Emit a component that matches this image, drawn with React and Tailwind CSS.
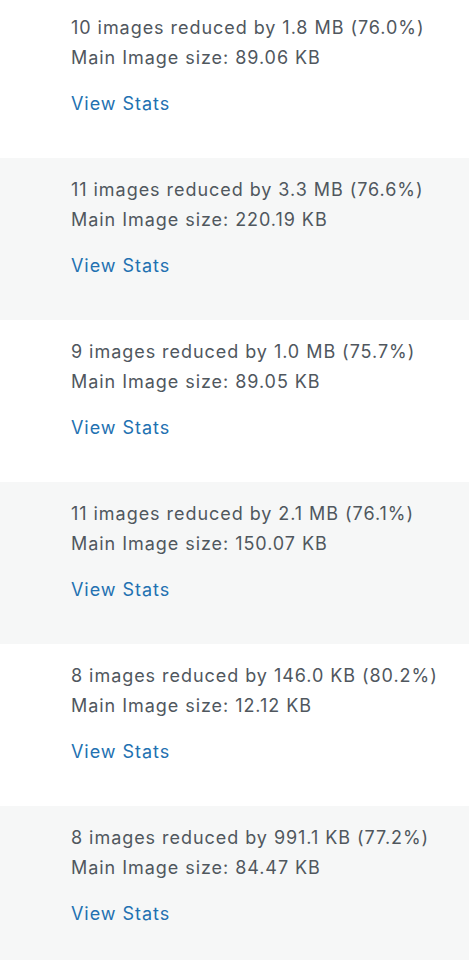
import React from "react";

const rows = [
  ["10 images reduced by 1.8 MB (76.0%)", "Main Image size: 89.06 KB"],
  ["11 images reduced by 3.3 MB (76.6%)", "Main Image size: 220.19 KB"],
  ["9 images reduced by 1.0 MB (75.7%)", "Main Image size: 89.05 KB"],
  ["11 images reduced by 2.1 MB (76.1%)", "Main Image size: 150.07 KB"],
  ["8 images reduced by 146.0 KB (80.2%)", "Main Image size: 12.12 KB"],
  ["8 images reduced by 991.1 KB (77.2%)", "Main Image size: 84.47 KB"],
];

export default function App() {
  return (
    <div
      className="w-[469px] h-[960px] overflow-hidden bg-white tracking-[0.95px]"
      style={{ fontFamily: 'Inter, "Liberation Sans", Arial, sans-serif' }}
    >
      <div className="-mt-[4px] flex flex-col">
        {rows.map((r, i) => (
          <div
            key={i}
            className={`h-[162px] shrink-0 pl-[71px] pt-[17px] ${i % 2 === 1 ? "bg-[#f6f7f7]" : "bg-white"}`}
          >
            <div className="text-[18px] leading-[30px] text-[#50575e]">{r[0]}</div>
            <div className="text-[18px] leading-[30px] text-[#50575e]">{r[1]}</div>
            <a className="mt-[16px] block text-[18px] leading-[30px] text-[#2271b1]" href="#">
              View Stats
            </a>
          </div>
        ))}
      </div>
    </div>
  );
}
